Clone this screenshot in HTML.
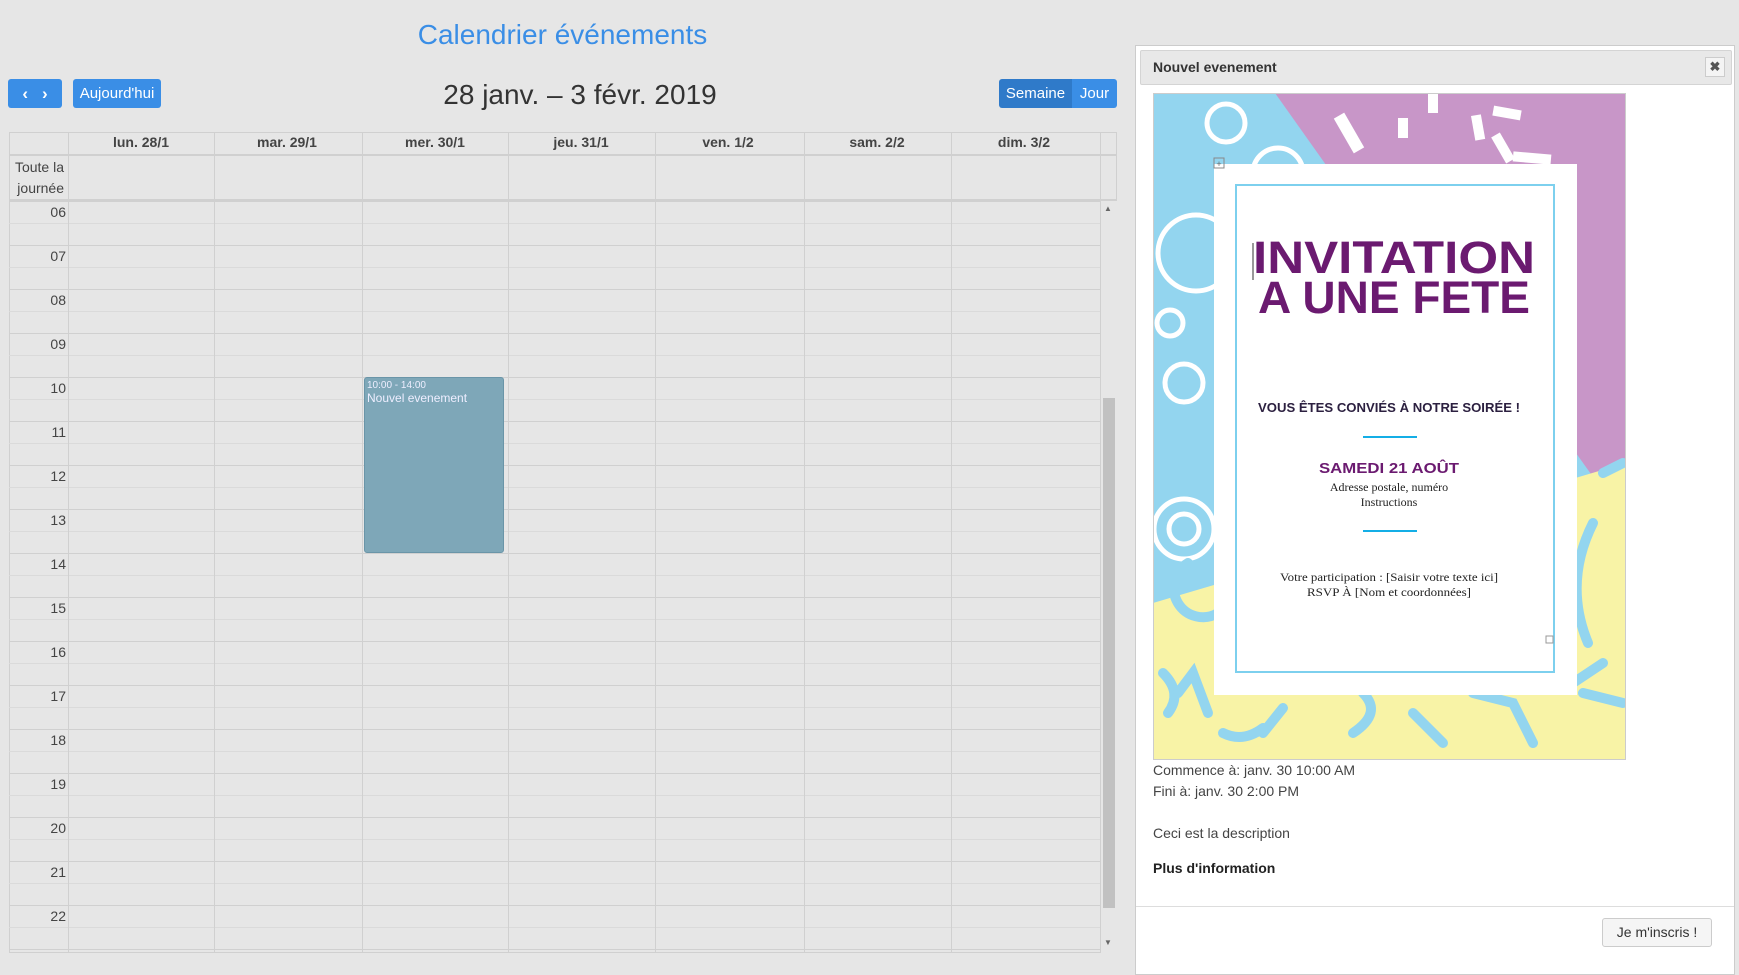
<!DOCTYPE html>
<html><head><meta charset="utf-8"><style>
*{box-sizing:border-box;margin:0;padding:0}
body{width:1739px;height:965px;background:#e6e6e6;font-family:"Liberation Sans",sans-serif;position:relative;overflow:hidden;color:#333}
.a{position:absolute}
.btn{background:#3a8ee6;color:#fff;border-radius:3px;font-size:15px;display:flex;align-items:center;justify-content:center}
.vl{position:absolute;width:1px;background:#d0d0d0}
.hl{position:absolute;height:1px;background:#d0d0d0}
.hd{position:absolute;top:134px;font-size:14px;font-weight:bold;color:#444;text-align:center;width:146px}
.hr{position:absolute;left:9px;width:57px;text-align:right;font-size:14px;color:#444}
.t{position:absolute;left:1153px;font-size:14px;color:#444}
</style></head><body>
<div class="a" style="left:0;width:1125px;top:19px;text-align:center;font-size:28px;color:#3a8ee6">Calendrier événements</div>
<div class="a btn" style="left:8px;top:79px;width:54px;height:29px;font-size:17px;font-weight:bold;gap:14px"><span>‹</span><span>›</span></div>
<div class="a btn" style="left:73px;top:79px;width:88px;height:29px">Aujourd'hui</div>
<div class="a" style="left:380px;width:400px;top:79px;text-align:center;font-size:28px;color:#333">28 janv. – 3 févr. 2019</div>
<div class="a btn" style="left:999px;top:79px;width:73px;height:29px;background:#2f7ac9;border-radius:3px 0 0 3px">Semaine</div>
<div class="a btn" style="left:1072px;top:79px;width:45px;height:29px;border-radius:0 3px 3px 0">Jour</div>

<div class="a" style="left:9px;top:132px;width:1108px;height:821px;border:1px solid #d0d0d0"></div>
<div class="hl" style="left:9px;top:154px;width:1108px;height:2px"></div>
<div class="hl" style="left:9px;top:199px;width:1108px;height:2px"></div>
<div class="a" style="left:9px;top:201px;width:1091px;height:752px;background:repeating-linear-gradient(to bottom,#d0d0d0 0,#d0d0d0 1px,transparent 1px,transparent 22px,#dadada 22px,#dadada 23px,transparent 23px,transparent 44px)"></div>
<div class="vl" style="left:68px;top:132px;height:821px"></div>
<div class="vl" style="left:214px;top:132px;height:821px"></div>
<div class="vl" style="left:362px;top:132px;height:821px"></div>
<div class="vl" style="left:508px;top:132px;height:821px"></div>
<div class="vl" style="left:655px;top:132px;height:821px"></div>
<div class="vl" style="left:804px;top:132px;height:821px"></div>
<div class="vl" style="left:951px;top:132px;height:821px"></div>
<div class="vl" style="left:1100px;top:132px;height:821px"></div>
<div class="a" style="left:1101px;top:201px;width:16px;height:752px;background:#e6e6e6"></div>
<div class="a" style="left:1103px;top:398px;width:12px;height:510px;background:#c1c1c1"></div>
<div class="a" style="left:1104px;top:204px;font-size:8px;color:#666">▲</div>
<div class="a" style="left:1104px;top:938px;font-size:8px;color:#666">▼</div>
<div class="hd" style="left:68px">lun. 28/1</div>
<div class="hd" style="left:214px">mar. 29/1</div>
<div class="hd" style="left:362px">mer. 30/1</div>
<div class="hd" style="left:508px">jeu. 31/1</div>
<div class="hd" style="left:655px">ven. 1/2</div>
<div class="hd" style="left:804px">sam. 2/2</div>
<div class="hd" style="left:951px">dim. 3/2</div>
<div class="a" style="left:9px;top:157px;width:55px;text-align:right;font-size:14px;line-height:21px;color:#444">Toute la journée</div>
<div class="hr" style="top:204px">06</div><div class="hr" style="top:248px">07</div><div class="hr" style="top:292px">08</div><div class="hr" style="top:336px">09</div><div class="hr" style="top:380px">10</div><div class="hr" style="top:424px">11</div><div class="hr" style="top:468px">12</div><div class="hr" style="top:512px">13</div><div class="hr" style="top:556px">14</div><div class="hr" style="top:600px">15</div><div class="hr" style="top:644px">16</div><div class="hr" style="top:688px">17</div><div class="hr" style="top:732px">18</div><div class="hr" style="top:776px">19</div><div class="hr" style="top:820px">20</div><div class="hr" style="top:864px">21</div><div class="hr" style="top:908px">22</div>
<div class="a" style="left:364px;top:377px;width:140px;height:176px;background:#7ea7b8;border:1px solid #6a95a8;border-radius:3px;color:#eef;padding:2px 2px;font-size:10px;line-height:12px">10:00 - 14:00<br><span style="font-size:12px">Nouvel evenement</span></div>

<!-- modal -->
<div class="a" style="left:1135px;top:45px;width:600px;height:930px;background:#fff;border:1px solid #ccc"></div>
<div class="a" style="left:1140px;top:50px;width:592px;height:35px;background:#e8e8e8;border:1px solid #d4d4d4;border-radius:2px"></div>
<div class="a" style="left:1153px;top:59px;font-size:14px;font-weight:bold;color:#333">Nouvel evenement</div>
<div class="a" style="left:1705px;top:57px;width:20px;height:20px;border:1px solid #ccc;background:#f4f4f4;font-size:13px;text-align:center;line-height:18px;color:#555;font-weight:bold">✖</div>
<svg class="a" style="left:1153px;top:93px" width="473" height="667" viewBox="0 0 473 667">
<rect width="473" height="667" fill="#93d5ef"/>
<polygon points="122,0 473,0 473,430 380,300 200,110" fill="#c896c8"/>
<polygon points="0,510 473,370 473,667 0,667" fill="#f8f3a6"/>
<g fill="#fff">
<rect x="190" y="20" width="12" height="40" transform="rotate(-30 196 40)"/><rect x="275" y="0" width="10" height="20"/><rect x="245" y="25" width="10" height="20"/>
<rect x="320" y="22" width="10" height="25" transform="rotate(-10 325 34)"/><rect x="340" y="15" width="28" height="10" transform="rotate(10 354 20)"/>
<rect x="345" y="40" width="10" height="30" transform="rotate(-30 350 55)"/><rect x="360" y="60" width="38" height="10" transform="rotate(5 379 65)"/>
<rect x="405" y="130" width="10" height="40" transform="rotate(-15 410 150)"/><rect x="400" y="230" width="10" height="18"/>
<rect x="400" y="290" width="10" height="35" transform="rotate(-35 405 307)"/>
</g>
<g fill="none" stroke="#fff" stroke-width="5">
<circle cx="73" cy="30" r="19"/><circle cx="125" cy="80" r="25"/><circle cx="43" cy="160" r="38"/>
<circle cx="17" cy="230" r="13"/><circle cx="31" cy="290" r="19"/><circle cx="31" cy="436" r="30"/><circle cx="31" cy="436" r="15"/>
</g>
<g fill="none" stroke="#93d5ef" stroke-width="10" stroke-linecap="round">
<path d="M35,470 a25,25 0 1 0 30,50"/><path d="M10,580 q20,20 5,40"/><path d="M25,600 l15,-20 l15,40"/>
<path d="M110,640 l20,-25"/><path d="M200,640 q30,-20 10,-40"/><path d="M260,620 l30,30"/><path d="M320,600 l40,10 l20,40"/>
<path d="M420,590 l30,-20 M430,600 l40,10"/><path d="M440,430 q-30,60 -5,120"/><path d="M450,380 l20,-10"/><path d="M70,640 q20,10 40,-5"/>
</g>
<rect x="61" y="71" width="363" height="531" fill="#fff"/>
<rect x="83" y="92" width="318" height="487" fill="none" stroke="#7dd0ee" stroke-width="2"/>
<rect x="61" y="65" width="10" height="10" fill="none" stroke="#888"/><text x="66" y="74" font-size="9" text-anchor="middle" fill="#666">+</text>
<rect x="393" y="543" width="7" height="7" fill="none" stroke="#999"/>
<line x1="100" y1="150" x2="100" y2="187" stroke="#333"/>
<g text-anchor="middle" font-family="Liberation Sans,sans-serif">
<text x="241" y="180" font-size="45" font-weight="bold" fill="#6b1a70" textLength="282" lengthAdjust="spacingAndGlyphs">INVITATION</text>
<text x="241" y="220" font-size="45" font-weight="bold" fill="#6b1a70" textLength="272" lengthAdjust="spacingAndGlyphs">A UNE FETE</text>
<text x="236" y="319" font-size="12.5" font-weight="bold" fill="#2c2040" textLength="262" lengthAdjust="spacingAndGlyphs">VOUS ÊTES CONVIÉS À NOTRE SOIRÉE !</text>
<rect x="210" y="343" width="54" height="2" fill="#14aee6"/>
<text x="236" y="380" font-size="15" font-weight="bold" fill="#6b1a70" textLength="140" lengthAdjust="spacingAndGlyphs">SAMEDI 21 AOÛT</text>
<text x="236" y="398" font-size="12" fill="#222" font-family="Liberation Serif,serif">Adresse postale, numéro</text>
<text x="236" y="413" font-size="12" fill="#222" font-family="Liberation Serif,serif">Instructions</text>
<rect x="210" y="437" width="54" height="2" fill="#14aee6"/>
<text x="236" y="488" font-size="12" fill="#222" font-family="Liberation Serif,serif" textLength="218" lengthAdjust="spacingAndGlyphs">Votre participation : [Saisir votre texte ici]</text>
<text x="236" y="503" font-size="12" fill="#222" font-family="Liberation Serif,serif" textLength="164" lengthAdjust="spacingAndGlyphs">RSVP À [Nom et coordonnées]</text>
</g>
<rect x="0.5" y="0.5" width="472" height="666" fill="none" stroke="#ccc"/>
</svg>
<div class="t" style="top:762px">Commence à: janv. 30 10:00 AM</div>
<div class="t" style="top:783px">Fini à: janv. 30 2:00 PM</div>
<div class="t" style="top:825px">Ceci est la description</div>
<div class="t" style="top:860px;font-weight:bold;color:#222">Plus d'information</div>
<div class="hl" style="left:1136px;top:906px;width:598px;background:#ddd"></div>
<div class="a" style="left:1602px;top:918px;width:110px;height:29px;border:1px solid #ccc;border-radius:3px;background:#f5f5f5;font-size:14px;text-align:center;line-height:27px;color:#333">Je m'inscris !</div>
</body></html>
